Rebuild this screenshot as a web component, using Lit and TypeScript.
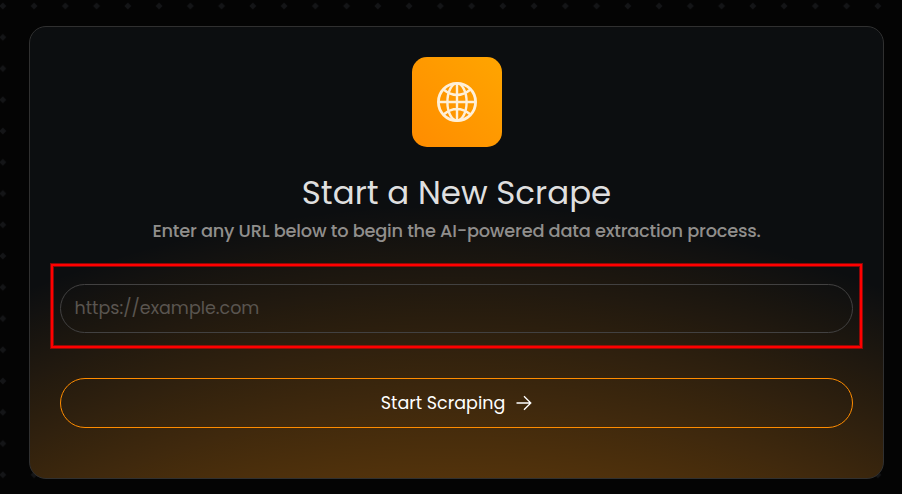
import { LitElement, html, css } from "lit";
import { customElement } from "lit/decorators.js";

@customElement("app-root")
export class AppRoot extends LitElement {
  static styles = css`
    :host {
      display: block;
      position: relative;
      box-sizing: border-box;
      width: 902px;
      height: 494px;
      padding: 26px 18px 15px 29px;
      overflow: hidden;
      background: #040404;
      font-family: Poppins, Inter, sans-serif;
    }
    * { box-sizing: border-box; }
    .dots { position: absolute; inset: 0; width: 100%; height: 100%; }
    .card {
      position: relative;
      display: flex;
      flex-direction: column;
      align-items: center;
      width: 855px;
      height: 453px;
      padding: 30px;
      border: 1px solid #303030;
      border-radius: 17px;
      background:
        radial-gradient(circle 1140px at 50% calc(100% + 867px), rgba(255, 140, 0, 0.29) 76%, rgba(255, 140, 0, 0) 100%),
        #0c0e10;
    }
    .badge {
      display: flex;
      align-items: center;
      justify-content: center;
      width: 90px;
      height: 90px;
      border-radius: 15px;
      background: linear-gradient(45deg, #ff8c00, #ffa500);
    }
    .globe { width: 40px; height: 40px; }
    h1 {
      margin: 25px 0 0;
      height: 42px;
      font-size: 32.5px;
      line-height: 42px;
      font-weight: 400;
      color: #dfdfdf;
      white-space: nowrap;
    }
    p {
      margin: 3px 0 0;
      height: 28px;
      font-size: 17.8px;
      letter-spacing: -0.225px;
      line-height: 28px;
      font-weight: 500;
      color: #908e8c;
      white-space: nowrap;
    }
    .field {
      width: 811px;
      height: 84px;
      margin-top: 19px;
      padding: 18px 7px 0;
      border: 2px solid #ff0000;
      box-shadow: 0 0 0 1px rgba(255, 0, 0, 0.5), inset 0 0 0 1px rgba(255, 0, 0, 0.5);
      flex: none;
    }
    input {
      display: block;
      width: 793px;
      height: 49px;
      padding: 0 13.5px 2px;
      border: 1px solid #424141;
      border-radius: 25px;
      outline: none;
      background: transparent;
      font: 400 17.5px Poppins, Inter, sans-serif;
      color: #dfdfdf;
    }
    input::placeholder { color: #5a5550; opacity: 1; }
    button {
      display: flex;
      align-items: center;
      justify-content: center;
      gap: 11px;
      flex: none;
      width: 793px;
      height: 50px;
      margin-top: 30px;
      padding: 0;
      border: 1px solid #ff8c00;
      border-radius: 25px;
      background: transparent;
      color: #fff;
      font: 400 17.5px Poppins, Inter, sans-serif;
    }
    .arrow { width: 16px; height: 16px; }
  `;

  render() {
    return html`
      <svg class="dots" aria-hidden="true">
        <defs>
          <pattern id="d" x="-12.75" y="-9.6" width="31.25" height="31.25" patternUnits="userSpaceOnUse">
            <path d="M15.6 12.2l3.4 3.4-3.4 3.4-3.4-3.4z" fill="#141517" />
          </pattern>
        </defs>
        <rect width="884" height="494" fill="url(#d)" />
      </svg>
      <main class="card">
        <div class="badge">
          <svg class="globe" viewBox="0 0 40 40" fill="none" stroke="#fff0d8" stroke-width="2.4">
            <circle cx="20" cy="20" r="18.6" stroke-width="2.8" />
            <ellipse cx="20" cy="20" rx="9.6" ry="18.6" />
            <path d="M20 1.4v37.2M1.4 20h37.2M6.5 7.5Q20 18.5 33.5 7.5M6.5 32.5Q20 21.5 33.5 32.5" />
          </svg>
        </div>
        <h1>Start a New Scrape</h1>
        <p>Enter any URL below to begin the AI-powered data extraction process.</p>
        <div class="field"><input type="text" placeholder="https://example.com" /></div>
        <button type="button">
          <span>Start Scraping</span>
          <svg class="arrow" viewBox="0 0 16 16" fill="none" stroke="#fff" stroke-width="1.3">
            <path d="M0.5 8h14.2M8 1.2L14.8 8 8 14.8" />
          </svg>
        </button>
      </main>
    `;
  }
}
